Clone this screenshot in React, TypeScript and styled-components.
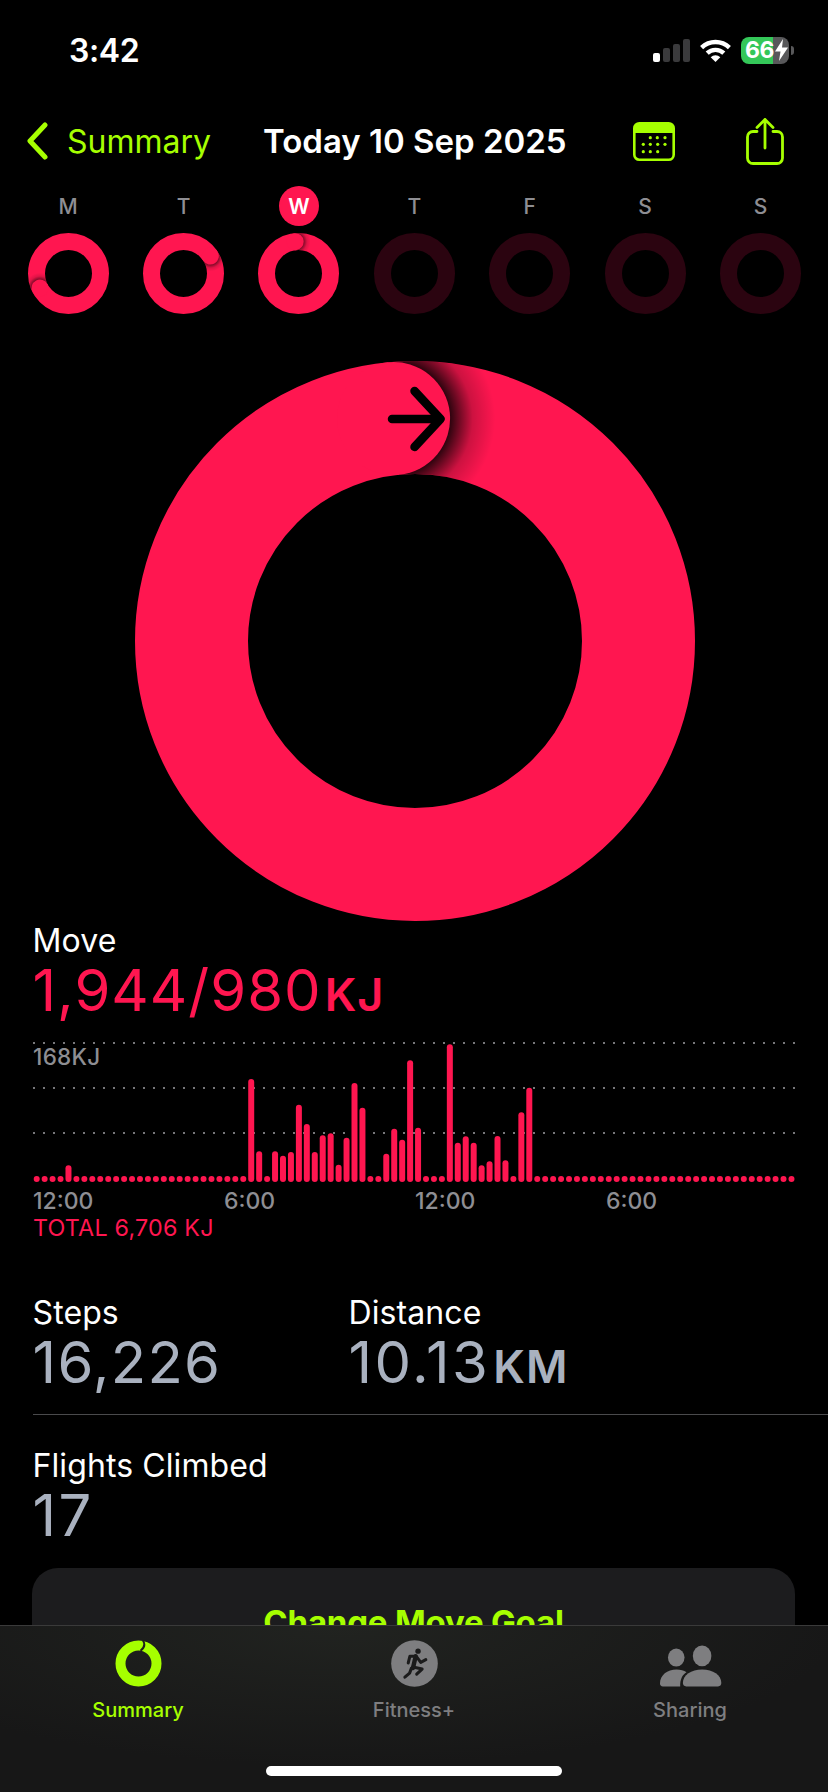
import React, { useId } from "react";
import styled, { createGlobalStyle } from "styled-components";

const PINK = "#ff1650";
const DIM = "#2b0410";
const LIME = "#a6ff00";
const FONT = `Inter, "Liberation Sans", sans-serif`;

const Global = createGlobalStyle`
  html, body { margin: 0; padding: 0; background: #000; }
  body { font-family: ${FONT}; }
`;

const Screen = styled.div`
  position: relative;
  width: 828px;
  height: 1792px;
  overflow: hidden;
  background: #000;
  color: #fff;
`;

const StatusBar = styled.div`
  display: flex;
  align-items: center;
  justify-content: space-between;
  height: 100px;
  padding: 0 34px 0 69px;
  box-sizing: border-box;
`;
const Clock = styled.span`
  font-size: 32px;
  font-weight: 600;
  letter-spacing: -0.4px;
`;
const StatusIcons = styled.div`
  display: flex;
  align-items: center;
  gap: 10px;
`;
const Signal = styled.div`
  display: flex;
  align-items: flex-end;
  gap: 3px;
  height: 23px;
`;
const SignalBar = styled.i<{ $h: number; $on?: boolean }>`
  display: block;
  width: 7px;
  height: ${(p) => p.$h}px;
  border-radius: 2px;
  background: ${(p) => (p.$on ? "#fff" : "#3a3a3c")};
`;
const Battery = styled.div`
  position: relative;
  display: flex;
  align-items: center;
  justify-content: flex-start;
  width: 48px;
  height: 27px;
  padding-left: 4px;
  box-sizing: border-box;
  border-radius: 8px;
  margin-right: 5px;
  background: linear-gradient(90deg, #34c759 0 32px, #58585a 32px);
  font-size: 23px;
  font-weight: 700;
  letter-spacing: -0.5px;
  &::after {
    content: "";
    position: absolute;
    right: -5px;
    top: 9px;
    width: 3px;
    height: 9px;
    border-radius: 0 3px 3px 0;
    background: #58585a;
  }
`;

const NavBar = styled.div`
  display: grid;
  grid-template-columns: 263px 303px 1fr;
  align-items: center;
  height: 82px;
`;
const BackLink = styled.div`
  display: flex;
  align-items: center;
  gap: 18px;
  padding-left: 25px;
  color: ${LIME};
  font-size: 32px;
  letter-spacing: 0;
`;
const Title = styled.div`
  font-size: 33px;
  font-weight: 600;
  white-space: nowrap;
  letter-spacing: 0;
`;
const NavActions = styled.div`
  display: flex;
  align-items: center;
  gap: 71px;
  padding-left: 67px;
`;

const Week = styled.div`
  display: grid;
  grid-template-columns: repeat(7, 115.4px);
  padding-left: 10.5px;
  justify-items: center;
`;
const DayLabel = styled.div<{ $active?: boolean }>`
  display: flex;
  align-items: center;
  justify-content: center;
  width: 40px;
  height: 40px;
  margin-top: 4px;
  border-radius: 50%;
  font-size: 21px;
  font-weight: ${(p) => (p.$active ? 600 : 500)};
  color: ${(p) => (p.$active ? "#fff" : "#8e8e93")};
  background: ${(p) => (p.$active ? PINK : "transparent")};
`;
const DayRing = styled.div`
  margin-top: 7px;
  height: 81px;
`;

const BigRingWrap = styled.div`
  display: flex;
  justify-content: center;
  margin-top: 47px;
  height: 559px;
  padding-left: 1px;
`;

const Metric = styled.div`
  padding-left: 32.5px;
`;
const MetricName = styled.div`
  font-size: 32px;
  line-height: 38px;
  letter-spacing: 0.1px;
  white-space: nowrap;
`;
const MetricValue = styled.div<{ $color: string; $tracking?: number }>`
  font-size: 58px;
  line-height: 60px;
  font-weight: 430;
  color: ${(p) => p.$color};
  white-space: nowrap;
  letter-spacing: ${(p) => p.$tracking ?? 1}px;
`;
const Unit = styled.span`
  margin-left: 3px;
  font-size: 45px;
  font-weight: 600;
  letter-spacing: 1px;
`;

const MoveSection = styled(Metric)`
  padding-top: 2px;
`;
const Chart = styled.div`
  position: relative;
  margin-top: 16px;
  height: 148px;
`;
const ChartMax = styled.div`
  position: absolute;
  left: 33px;
  top: 3px;
  font-size: 22.5px;
  line-height: 26px;
  font-weight: 500;
  letter-spacing: 0.3px;
  color: #8e8e93;
`;
const ChartSvg = styled.svg`
  display: block;
  width: 828px;
  height: 148px;
`;
const AxisRow = styled.div`
  display: grid;
  grid-template-columns: repeat(4, 191px);
  padding-left: 33px;
  font-size: 23px;
  line-height: 26px;
  font-weight: 500;
  color: #8e8e93;
  margin-top: -1px;
`;
const Total = styled.div`
  padding-left: 33px;
  font-size: 23.3px;
  line-height: 27px;
  color: ${PINK};
  letter-spacing: 0.2px;
`;

const StatsRow = styled.div`
  display: grid;
  grid-template-columns: 316px 1fr;
  margin-top: 53px;
`;
const Divider = styled.div`
  height: 1px;
  margin: 17px 0 0 33px;
  background: #4a4a4c;
`;
const FlightsSection = styled(Metric)`
  margin-top: 32px;
`;

const GoalCard = styled.div`
  display: flex;
  justify-content: center;
  margin: 23px 33px 0 32px;
  height: 130px;
  padding-top: 34px;
  box-sizing: border-box;
  border-radius: 26px;
  background: #1c1c1e;
  color: ${LIME};
  font-size: 33px;
  font-weight: 700;
  letter-spacing: -0.2px;
`;

const TabBar = styled.div`
  position: absolute;
  left: 0;
  right: 0;
  top: 1625px;
  height: 167px;
  box-sizing: border-box;
  border-top: 1px solid #3a3a3a;
  background: radial-gradient(500px 140px at 340px 0, #212320, #171717 100%);
  display: grid;
  grid-template-columns: repeat(3, 276px);
`;
const Tab = styled.div<{ $active?: boolean }>`
  display: flex;
  flex-direction: column;
  align-items: center;
  padding-top: 14px;
  color: ${(p) => (p.$active ? LIME : "#7e7e80")};
`;
const TabIcon = styled.div`
  display: flex;
  align-items: flex-end;
  justify-content: center;
  height: 47px;
`;
const TabLabel = styled.div`
  margin-top: 11px;
  font-size: 20px;
  line-height: 25px;
  font-weight: 500;
`;
const HomeIndicator = styled.div`
  position: absolute;
  left: 266px;
  top: 1766px;
  width: 296px;
  height: 10px;
  border-radius: 5px;
  background: #fff;
`;

type RingProps = {
  outer: number;
  inner: number;
  angle?: number;
  color: string;
  arrow?: boolean;
  shadow?: number;
};

function Ring({ outer, inner, angle, color, arrow, shadow = 0.82 }: RingProps) {
  const id = useId();
  const mid = (outer + inner) / 2;
  const w = outer - inner;
  const capR = w / 2;
  const reach = capR * 1.8;
  return (
    <svg width={outer * 2} height={outer * 2} viewBox={`${-outer} ${-outer} ${outer * 2} ${outer * 2}`} style={{ display: "block" }}>
      <defs>
        <clipPath id={`${id}c`}>
          <path
            clipRule="evenodd"
            d={`M${-outer} 0a${outer} ${outer} 0 1 0 ${outer * 2} 0a${outer} ${outer} 0 1 0 ${-outer * 2} 0Z M${-inner} 0a${inner} ${inner} 0 1 0 ${inner * 2} 0a${inner} ${inner} 0 1 0 ${-inner * 2} 0Z`}
          />
        </clipPath>
        <radialGradient id={`${id}g`} gradientUnits="userSpaceOnUse" cx={0} cy={-mid} r={reach}>
          <stop offset={capR / reach} stopColor="#000" stopOpacity={shadow} />
          <stop offset={(capR / reach + 1) / 2} stopColor="#000" stopOpacity={shadow * 0.24} />
          <stop offset={1} stopColor="#000" stopOpacity={0} />
        </radialGradient>
      </defs>
      <circle r={mid} fill="none" stroke={color} strokeWidth={w} />
      {angle !== undefined && (
        <g transform={`rotate(${angle})`}>
          <rect
            x={0}
            y={-mid - reach}
            width={reach}
            height={reach * 2}
            fill={`url(#${id}g)`}
            clipPath={`url(#${id}c)`}
          />
          <circle cx={0} cy={-mid} r={capR} fill={color} />
        </g>
      )}
      {arrow && (
        <g fill="none" stroke="#000" strokeWidth={8.5} strokeLinecap="round" strokeLinejoin="round">
          <path d="M-23 -222H24" />
          <path d="M-0.5 -250L25.5 -222L-0.5 -194" />
        </g>
      )}
    </svg>
  );
}

const BARS: Record<number, number> = {};
const setBars = (base: number, list: [number, number][]) =>
  list.forEach(([i, top]) => (BARS[i] = (base - top) / 3));
setBars(812, [
  [4, 762], [27, 503], [28, 720], [30, 720], [31, 733], [32, 722], [33, 580], [34, 638], [35, 722],
  [36, 672], [37, 666], [38, 760], [39, 679], [40, 515], [41, 589], [44, 727], [45, 652], [46, 685], [47, 447],
]);
setBars(453, [
  [48, 290], [52, 40], [53, 335], [54, 316], [55, 335], [56, 403], [57, 391], [58, 315], [59, 388], [61, 244], [62, 170],
]);

function ActivityChart() {
  const top = 1042;
  const base = 1181 - top + 2;
  return (
    <ChartSvg viewBox="0 0 828 148">
      {[2, 47, 92].map((y) => (
        <line key={y} x1={33} x2={795} y1={y} y2={y} stroke="#77777a" strokeWidth={2} strokeDasharray="2 8" />
      ))}
      {Array.from({ length: 96 }, (_, i) => {
        const h = BARS[i] ?? 6;
        return (
          <rect key={i} x={33.7 + i * 7.945} y={base - h} width={6} height={h} rx={3} fill={PINK} />
        );
      })}
    </ChartSvg>
  );
}

const Chevron = () => (
  <svg width="24" height="38" viewBox="0 0 24 38">
    <path d="M20 3L5 19L20 35" fill="none" stroke={LIME} strokeWidth="5" strokeLinecap="round" strokeLinejoin="round" />
  </svg>
);

const CalendarIcon = () => (
  <svg width="42" height="39" viewBox="0 0 42 39">
    <rect x="1.3" y="1.3" width="39.4" height="36.4" rx="5" fill="none" stroke={LIME} strokeWidth="2.6" />
    <path d="M1 6a5 5 0 0 1 5-5h30a5 5 0 0 1 5 5v5H1Z" fill={LIME} />
    {[[17.3, 15.7], [24.3, 15.7], [32, 15.7], [10.3, 22.3], [17.3, 22.3], [24.7, 22.3], [32, 22.3], [10.3, 29.7], [17.3, 29.7], [24.7, 29.7]].map(
      ([x, y]) => (
        <circle key={`${x}-${y}`} cx={x} cy={y} r="1.6" fill={LIME} />
      )
    )}
  </svg>
);

const ShareIcon = () => (
  <svg width="38" height="48" viewBox="0 0 38 48" fill="none" stroke={LIME} strokeWidth="2.8" strokeLinecap="round" strokeLinejoin="round">
    <path d="M11 14.5H7a5.5 5.5 0 0 0-5.5 5.5v21a5.5 5.5 0 0 0 5.5 5.5h24a5.5 5.5 0 0 0 5.5-5.5V20a5.5 5.5 0 0 0-5.5-5.5h-4" />
    <path d="M19 31V2.5M11 10.5l8-8 8 8" />
  </svg>
);

const Wifi = () => (
  <svg width="31" height="24" viewBox="0 0 31 24">
    <g fill="none" stroke="#fff" strokeWidth="4.4">
      <path d="M1.6 9.6A20 20 0 0 1 29.4 9.6" />
      <path d="M7.2 15.2A12 12 0 0 1 23.8 15.2" />
    </g>
    <path d="M15.5 24L10.7 19.2A7 7 0 0 1 20.3 19.2Z" fill="#fff" />
  </svg>
);

const Bolt = () => (
  <svg width="13" height="22" viewBox="0 0 13 22" style={{ marginLeft: 1 }}>
    <path d="M8 0L0 12.5H5.5L4 22L13 8.5H7Z" fill="#fff" />
  </svg>
);

const SummaryTabIcon = () => (
  <svg width="47" height="47" viewBox="-23.5 -23.5 47 47">
    <circle r="18" fill="none" stroke={LIME} strokeWidth="10" />
    <path d="M4.2 -23.5C6.5 -20 6.5 -16 2 -12.8" fill="none" stroke="#1d1e1c" strokeWidth="2" />
  </svg>
);

const FitnessTabIcon = () => (
  <svg width="47" height="47" viewBox="30 32 139 139">
    <circle cx="99.5" cy="101.5" r="69" fill="#7e7e80" />
    <circle cx="110" cy="65" r="8" fill="#1b1b1b" />
    <g fill="none" stroke="#1b1b1b" strokeWidth="9" strokeLinecap="round" strokeLinejoin="round">
      <path d="M103 80L95 115" strokeWidth="13" />
      <path d="M102 80H86L81 100" />
      <path d="M106 82L118 98L133 90" />
      <path d="M95 112L122 118L106 133" />
      <path d="M90 116L85 130L71 142" />
    </g>
  </svg>
);

const SharingTabIcon = () => (
  <svg width="63" height="42" viewBox="25 38 190 125" fill="#7e7e80">
    <ellipse cx="77" cy="75" rx="25" ry="27" />
    <path d="M28 153C28 128 50 111 78 111C90 111 100 114 108 119C96 126 88 140 89 162H37C31 162 28 158 28 153Z" />
    <ellipse cx="155" cy="70" rx="28" ry="31" />
    <path d="M97 152C97 128 122 111 155 111C188 111 213 128 213 152C213 158 209 162 203 162H107C101 162 97 158 97 152Z" />
  </svg>
);

const DAYS: { d: string; angle?: number; color: string; active?: boolean }[] = [
  { d: "M", angle: 243, color: PINK },
  { d: "T", angle: 57, color: PINK },
  { d: "W", angle: -6, color: PINK, active: true },
  { d: "T", color: DIM },
  { d: "F", color: DIM },
  { d: "S", color: DIM },
  { d: "S", color: DIM },
];

export default function App() {
  return (
    <Screen>
      <Global />
      <StatusBar>
        <Clock>3:42</Clock>
        <StatusIcons>
          <Signal>
            <SignalBar $h={9} $on />
            <SignalBar $h={14} />
            <SignalBar $h={18} />
            <SignalBar $h={23} />
          </Signal>
          <Wifi />
          <Battery>
            66
            <Bolt />
          </Battery>
        </StatusIcons>
      </StatusBar>
      <NavBar>
        <BackLink>
          <Chevron />
          Summary
        </BackLink>
        <Title>Today 10 Sep 2025</Title>
        <NavActions>
          <CalendarIcon />
          <ShareIcon />
        </NavActions>
      </NavBar>
      <Week>
        {DAYS.map((x, i) => (
          <DayLabel key={i} $active={x.active}>
            {x.d}
          </DayLabel>
        ))}
        {DAYS.map((x, i) => (
          <DayRing key={i}>
            <Ring outer={40.5} inner={23.5} angle={x.angle} color={x.color} shadow={0.5} />
          </DayRing>
        ))}
      </Week>
      <BigRingWrap>
        <Ring outer={280} inner={167} angle={-5.5} color={PINK} arrow />
      </BigRingWrap>
      <MoveSection>
        <MetricName>Move</MetricName>
        <MetricValue $color={PINK}>
          1,944/980<Unit>KJ</Unit>
        </MetricValue>
      </MoveSection>
      <Chart>
        <ActivityChart />
        <ChartMax>168KJ</ChartMax>
      </Chart>
      <AxisRow>
        <span>12:00</span>
        <span>6:00</span>
        <span>12:00</span>
        <span>6:00</span>
      </AxisRow>
      <Total>TOTAL 6,706 KJ</Total>
      <StatsRow>
        <Metric>
          <MetricName>Steps</MetricName>
          <MetricValue $color="#a9b1bf" $tracking={1.3}>16,226</MetricValue>
        </Metric>
        <Metric>
          <MetricName>Distance</MetricName>
          <MetricValue $color="#a9b1bf" $tracking={2.4}>
            10.13<Unit>KM</Unit>
          </MetricValue>
        </Metric>
      </StatsRow>
      <Divider />
      <FlightsSection>
        <MetricName>Flights Climbed</MetricName>
        <MetricValue $color="#a9b1bf" $tracking={2.5}>17</MetricValue>
      </FlightsSection>
      <GoalCard>Change Move Goal</GoalCard>
      <TabBar>
        <Tab $active>
          <TabIcon>
            <SummaryTabIcon />
          </TabIcon>
          <TabLabel>Summary</TabLabel>
        </Tab>
        <Tab>
          <TabIcon>
            <FitnessTabIcon />
          </TabIcon>
          <TabLabel>Fitness+</TabLabel>
        </Tab>
        <Tab>
          <TabIcon>
            <SharingTabIcon />
          </TabIcon>
          <TabLabel>Sharing</TabLabel>
        </Tab>
      </TabBar>
      <HomeIndicator />
    </Screen>
  );
}
